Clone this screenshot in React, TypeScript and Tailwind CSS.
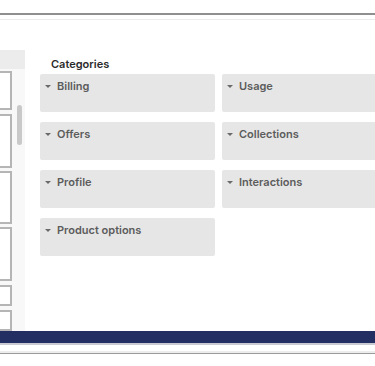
import { type ReactNode } from "react"

function Card({ children }: { children: ReactNode }) {
  return (
    <div className="h-[38px] w-[175px] shrink-0 rounded-[2px] bg-[#e6e6e6] px-[5px] pt-[5px]">
      <div className="flex items-center gap-[6px] text-[11px] font-semibold leading-[14px] text-[#5c5c5c]">
        <span className="mt-[1px] h-0 w-0 border-x-[3px] border-t-[3px] border-x-transparent border-t-[#6a6a6a]" />
        <span>{children}</span>
      </div>
    </div>
  )
}

export default function App() {
  const boxes = [
    "mt-[2px] h-[39px]",
    "mt-[4px] h-[54px]",
    "mt-[3px] h-[53px]",
    "mt-[3px] h-[54px]",
    "mt-[4px] h-[21px]",
    "mt-[4px] h-[21px]",
  ]
  return (
    <div className="relative h-[366px] w-[375px] overflow-hidden bg-white" style={{ fontFamily: "Inter, 'Noto Sans', sans-serif" }}>
      <div className="h-[13px]" />
      <div className="h-[2px] bg-[#8f8f8f]" />
      <div className="h-[4px]" />
      <div className="h-[1px] bg-[#ececec]" />
      <div className="flex h-[311px]">
        {/* left list panel */}
        <div className="flex w-[25px] shrink-0 flex-col">
          <div className="h-[32px]" />
          <div className="h-[20px] bg-[#ececec]" />
          <div className="relative flex flex-1 flex-col bg-[#f8f8f8]">
            {boxes.map((b, i) => (
              <div key={i} className={`${b} w-[12px] border-y-2 border-r-2 border-[#b5b5b5] bg-white`} />
            ))}
            <div className="absolute left-[17px] top-[36px] h-[40px] w-[5px] rounded-full bg-[#c9c9c9]" />
          </div>
        </div>
        {/* categories */}
        <div className="flex flex-1 flex-col pl-[15px]">
          <div className="pl-[11px] pt-[37px] text-[11px] font-semibold leading-[14px] text-[#2b2b2b]">Categories</div>
          <div className="mt-[3px] flex flex-col gap-[10px]">
            <div className="flex gap-[7px]">
              <Card>Billing</Card>
              <Card>Usage</Card>
            </div>
            <div className="flex gap-[7px]">
              <Card>Offers</Card>
              <Card>Collections</Card>
            </div>
            <div className="flex gap-[7px]">
              <Card>Profile</Card>
              <Card>Interactions</Card>
            </div>
            <div className="flex gap-[7px]">
              <Card>Product options</Card>
            </div>
          </div>
        </div>
      </div>
      <div className="h-[12px] bg-[#232e63]" />
      <div className="h-[2px] bg-[#c8cad4]" />
      <div className="h-[6px]" />
      <div className="h-[2px] bg-[#ededed]" />
      <div className="h-[1px] bg-[#9a9a9a]" />
    </div>
  )
}
